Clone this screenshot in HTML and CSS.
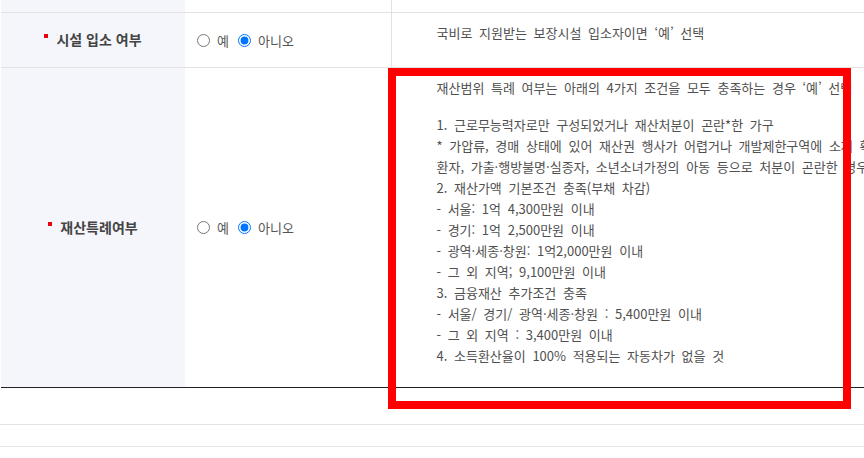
FILE: index.html
```html
<!DOCTYPE html>
<html lang="ko">
<head>
<meta charset="utf-8">
<title>재산특례여부</title>
<link rel="stylesheet" href="styles.css">
</head>
<body>
<div class="page">
  <table class="form">
    <colgroup>
      <col class="c-head">
      <col class="c-input">
      <col class="c-desc">
    </colgroup>
    <tr class="stub">
      <th></th>
      <td></td>
      <td class="desc"></td>
    </tr>
    <tr>
      <th><span class="req">시설 입소 여부</span></th>
      <td class="input">
        <div class="radios">
          <label class="opt"><input type="radio" name="facility">예</label>
          <label class="opt"><input type="radio" name="facility" checked>아니오</label>
        </div>
      </td>
      <td class="desc">
        <p>국비로 지원받는 보장시설 입소자이면 ‘예’ 선택</p>
      </td>
    </tr>
    <tr class="last">
      <th><span class="req">재산특례여부</span></th>
      <td class="input">
        <div class="radios">
          <label class="opt"><input type="radio" name="special">예</label>
          <label class="opt"><input type="radio" name="special" checked>아니오</label>
        </div>
      </td>
      <td class="desc">
        <p class="intro">재산범위 특례 여부는 아래의 4가지 조건을 모두 충족하는 경우 ‘예’ 선택</p>
        <p>1. 근로무능력자로만 구성되었거나 재산처분이 곤란*한 가구<br>
        * 가압류, 경매 상태에 있어 재산권 행사가 어렵거나 개발제한구역에 소재 확인, 중증질<br>
        환자, 가출·행방불명·실종자, 소년소녀가정의 아동 등으로 처분이 곤란한 경우<br>
        2. 재산가액 기본조건 충족(부채 차감)<br>
        - 서울: 1억 4,300만원 이내<br>
        - 경기: 1억 2,500만원 이내<br>
        - 광역·세종·창원: 1억2,000만원 이내<br>
        - 그 외 지역; 9,100만원 이내<br>
        3. 금융재산 추가조건 충족<br>
        - 서울/ 경기/ 광역·세종·창원 : 5,400만원 이내<br>
        - 그 외 지역 : 3,400만원 이내<br>
        4. 소득환산율이 100% 적용되는 자동차가 없을 것</p>
      </td>
    </tr>
  </table>
  <div class="after">
    <div class="after-row first"></div>
    <div class="after-row"></div>
  </div>
  <div class="callout" aria-hidden="true"></div>
</div>
</body>
</html>
```

FILE: styles.css
```css
html, body {
  margin: 0;
  padding: 0;
  overflow: hidden;
  background: #fff;
}

body {
  font-family: "Noto Sans CJK KR", "Noto Sans", sans-serif;
  font-size: 13px;
  line-height: 21px;
  color: #555;
}

.page {
  position: relative;
  width: 1100px;
}

.form {
  border-collapse: collapse;
  table-layout: fixed;
  width: 1099px;
  margin-left: 1px;
}

.c-head { width: 184px; }
.c-input { width: 206px; }
.c-desc { width: 709px; }

.form th,
.form td {
  padding: 0;
  border-bottom: 1px solid #e2e2e2;
}

.form th {
  background: #f5f6fb;
  text-align: center;
  vertical-align: middle;
  font-size: 14px;
  font-weight: 700;
  color: #444;
  padding: 16px 0 17px;
}

.form td.input {
  vertical-align: middle;
  padding-left: 12px;
}

.form td.desc {
  border-left: 1px solid #e2e2e2;
  vertical-align: top;
  padding: 9px 0 21px 45px;
  white-space: nowrap;
  word-spacing: 3px;
  color: #505050;
}

.form tr.stub th,
.form tr.stub td {
  height: 12px;
  padding: 0;
}

.form tr.last th,
.form tr.last td {
  border-bottom: 1px solid #222;
}

.req::before {
  content: "";
  display: inline-block;
  width: 4px;
  height: 4px;
  background: #e60012;
  margin-right: 8px;
  vertical-align: 7px;
}

.radios {
  display: flex;
  align-items: center;
  gap: 9px;
}

.opt {
  display: inline-flex;
  align-items: center;
  color: #555;
}

.opt input {
  margin: 0 7px 0 0;
  width: 13px;
  height: 13px;
}

.desc p {
  margin: 0;
}

.desc .intro {
  margin-bottom: 16px;
}

.after-row {
  height: 21px;
  border-bottom: 1px solid #e3e3e3;
}

.after-row.first {
  height: 36px;
}

.callout {
  position: absolute;
  left: 388px;
  top: 68px;
  width: 447px;
  height: 325px;
  border: 8px solid #ff0000;
}
```
